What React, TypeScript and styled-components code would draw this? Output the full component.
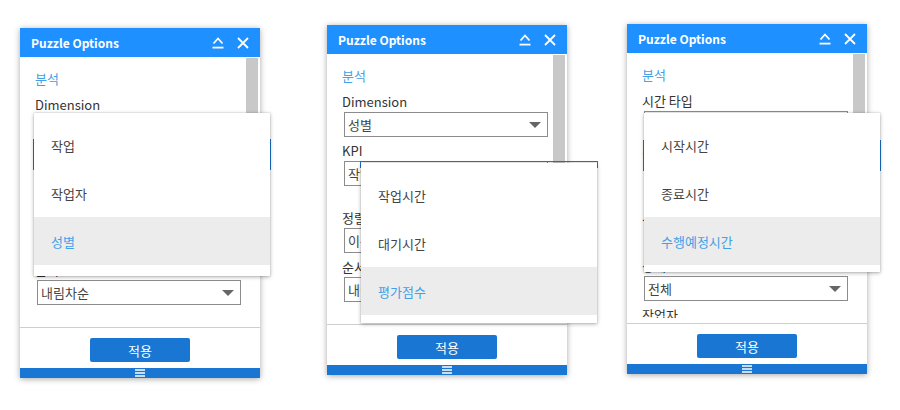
import React from 'react';
import styled, { createGlobalStyle } from 'styled-components';

const Global = createGlobalStyle`
  html, body { margin: 0; padding: 0; background: #fff; }
  body {
    font-family: "Noto Sans CJK KR", "Noto Sans", sans-serif;
    font-size: 13px;
    color: #333;
  }
`;

const Stage = styled.div`
  display: flex;
  align-items: flex-start;
  width: 900px;
  height: 410px;
`;

const Panel = styled.div<{ $x: number; $y: number }>`
  position: relative;
  flex: none;
  margin-left: ${p => p.$x}px;
  margin-top: ${p => p.$y}px;
  width: 240px;
  height: 350px;
  display: flex;
  flex-direction: column;
  background: #fff;
  box-shadow: 0 1px 6px rgba(0, 0, 0, 0.35);
`;

const Header = styled.div`
  flex: none;
  height: 29px;
  background: #1e90ff;
  color: #fff;
  display: flex;
  align-items: center;
  padding: 0 11px;
`;

const Title = styled.div`
  flex: 1;
  font-weight: 700;
  font-size: 12px;
  line-height: 16px;
`;

const HeaderIcons = styled.div`
  display: flex;
  align-items: center;
  gap: 13px;
  svg { display: block; }
`;

const Body = styled.div`
  flex: 1;
  min-height: 0;
  display: flex;
  overflow: hidden;
`;

const Content = styled.div`
  flex: 1;
  min-width: 0;
  padding: 12px 0 0 15px;
  display: flex;
  flex-direction: column;
`;

const ScrollTrack = styled.div`
  flex: none;
  width: 14px;
  padding: 1px 2px 0 0;
  box-sizing: border-box;
`;

const Thumb = styled.div`
  width: 12px;
  height: 205px;
  background: #c8c8c8;
`;

const SectionTitle = styled.div`
  color: #45a0e6;
  line-height: 20px;
  margin-bottom: 6px;
`;

const Label = styled.div<{ $gap?: boolean }>`
  line-height: 20px;
  color: #333;
  white-space: nowrap;
  margin-top: ${p => (p.$gap ? 18 : 0)}px;
`;

const Select = styled.div`
  flex: none;
  box-sizing: border-box;
  width: 204px;
  height: 25px;
  margin: 0 0 4px 2px;
  border: 1px solid #8c8c8c;
  display: flex;
  align-items: center;
  padding: 0 6px 0 3px;
  color: #444;
`;

const SelectText = styled.span`
  flex: 1;
  white-space: nowrap;
  overflow: hidden;
`;

const Caret = styled.span`
  width: 0;
  height: 0;
  border-left: 6px solid transparent;
  border-right: 6px solid transparent;
  border-top: 6px solid #666;
`;

const Footer = styled.div`
  flex: none;
  margin-top: 5px;
  border-top: 1px solid #cfcfcf;
  padding: 10px 0 6px;
  display: flex;
  justify-content: center;
`;

const ApplyButton = styled.button`
  width: 100px;
  height: 24px;
  border: 0;
  border-radius: 2px;
  background: #1976d2;
  color: #fff;
  font-family: inherit;
  font-size: 13px;
  padding: 0;
`;

const Grip = styled.div`
  flex: none;
  height: 10px;
  background: #1976d2;
  display: flex;
  align-items: center;
  justify-content: center;
  svg { display: block; }
`;

const FocusRing = styled.div<{ $left: number; $top: number; $width: number; $height: number }>`
  position: absolute;
  z-index: 1;
  left: ${p => p.$left}px;
  top: ${p => p.$top}px;
  width: ${p => p.$width}px;
  height: ${p => p.$height}px;
  box-sizing: border-box;
  border: 1px solid #1976d2;
`;

const Dropdown = styled.div<{ $left: number; $top: number; $height: number }>`
  position: absolute;
  z-index: 2;
  left: ${p => p.$left}px;
  top: ${p => p.$top}px;
  width: 236px;
  height: ${p => p.$height}px;
  box-sizing: border-box;
  padding: 8px 0 0;
  background: #fff;
  box-shadow: 0 1px 4px rgba(0, 0, 0, 0.32), 0 0 0 1px rgba(0, 0, 0, 0.04);
`;

const Option = styled.div<{ $selected?: boolean }>`
  height: 48px;
  display: flex;
  align-items: center;
  padding-left: 17px;
  color: ${p => (p.$selected ? '#42a0e8' : '#444')};
  background: ${p => (p.$selected ? '#ececec' : 'transparent')};
`;

type Field = { label: string; value?: string; gap?: boolean };
type PanelData = {
  x: number;
  y: number;
  fields: Field[];
  ring: { left: number; top: number; height: number };
  menu: { left: number; top: number; height: number; items: string[]; selected: number };
};

const panels: PanelData[] = [
  {
    x: 20,
    y: 28,
    fields: [
      { label: 'Dimension', value: '성별' },
      { label: 'KPI', value: '작업시간' },
      { label: '정렬 기준', value: '이름', gap: true },
      { label: '순서', value: '내림차순' },
    ],
    ring: { left: 13, top: 111, height: 31 },
    menu: { left: 14, top: 85, height: 163, items: ['작업', '작업자', '성별'], selected: 2 },
  },
  {
    x: 67,
    y: 25,
    fields: [
      { label: 'Dimension', value: '성별' },
      { label: 'KPI', value: '작업시간' },
      { label: '정렬 기준', value: '이름', gap: true },
      { label: '순서', value: '내림차순' },
    ],
    ring: { left: 33, top: 136, height: 7 },
    menu: { left: 34, top: 138, height: 160, items: ['작업시간', '대기시간', '평가점수'], selected: 2 },
  },
  {
    x: 60,
    y: 24,
    fields: [
      { label: '시간 타입', value: '수행예정시간' },
      { label: '기간', value: '오늘' },
      { label: '시간 단위', value: '시간', gap: true },
      { label: '상태', value: '전체' },
      { label: '작업자' },
    ],
    ring: { left: 16, top: 116, height: 31 },
    menu: { left: 17, top: 89, height: 159, items: ['시작시간', '종료시간', '수행예정시간'], selected: 2 },
  },
];

const CollapseIcon = () => (
  <svg width="12" height="13" viewBox="0 0 12 13" fill="none" stroke="#fff" strokeWidth="1.8">
    <path d="M1.5 7.5 L6 2.5 L10.5 7.5" />
    <path d="M0.5 11.6 H11.5" />
  </svg>
);

const CloseIcon = () => (
  <svg width="12" height="12" viewBox="0 0 12 12" fill="none" stroke="#fff" strokeWidth="1.8">
    <path d="M1 1 L11 11 M11 1 L1 11" />
  </svg>
);

const GripIcon = () => (
  <svg width="10" height="8" viewBox="0 0 10 8" fill="none" stroke="#fff" strokeWidth="1.4">
    <path d="M0 1 H10 M0 4 H10 M0 7 H10" />
  </svg>
);

const OptionsPanel = ({ data }: { data: PanelData }) => (
  <Panel $x={data.x} $y={data.y}>
    <Header>
      <Title>Puzzle Options</Title>
      <HeaderIcons>
        <CollapseIcon />
        <CloseIcon />
      </HeaderIcons>
    </Header>
    <Body>
      <Content>
        <SectionTitle>분석</SectionTitle>
        {data.fields.map((f, i) => (
          <React.Fragment key={i}>
            <Label $gap={f.gap}>{f.label}</Label>
            {f.value !== undefined && (
              <Select>
                <SelectText>{f.value}</SelectText>
                <Caret />
              </Select>
            )}
          </React.Fragment>
        ))}
      </Content>
      <ScrollTrack>
        <Thumb />
      </ScrollTrack>
    </Body>
    <Footer>
      <ApplyButton>적용</ApplyButton>
    </Footer>
    <Grip>
      <GripIcon />
    </Grip>
    <FocusRing $left={data.ring.left} $top={data.ring.top} $width={238} $height={data.ring.height} />
    <Dropdown $left={data.menu.left} $top={data.menu.top} $height={data.menu.height}>
      {data.menu.items.map((it, i) => (
        <Option key={it} $selected={i === data.menu.selected}>
          {it}
        </Option>
      ))}
    </Dropdown>
  </Panel>
);

export default function App() {
  return (
    <>
      <Global />
      <Stage>
        {panels.map((p, i) => (
          <OptionsPanel key={i} data={p} />
        ))}
      </Stage>
    </>
  );
}
